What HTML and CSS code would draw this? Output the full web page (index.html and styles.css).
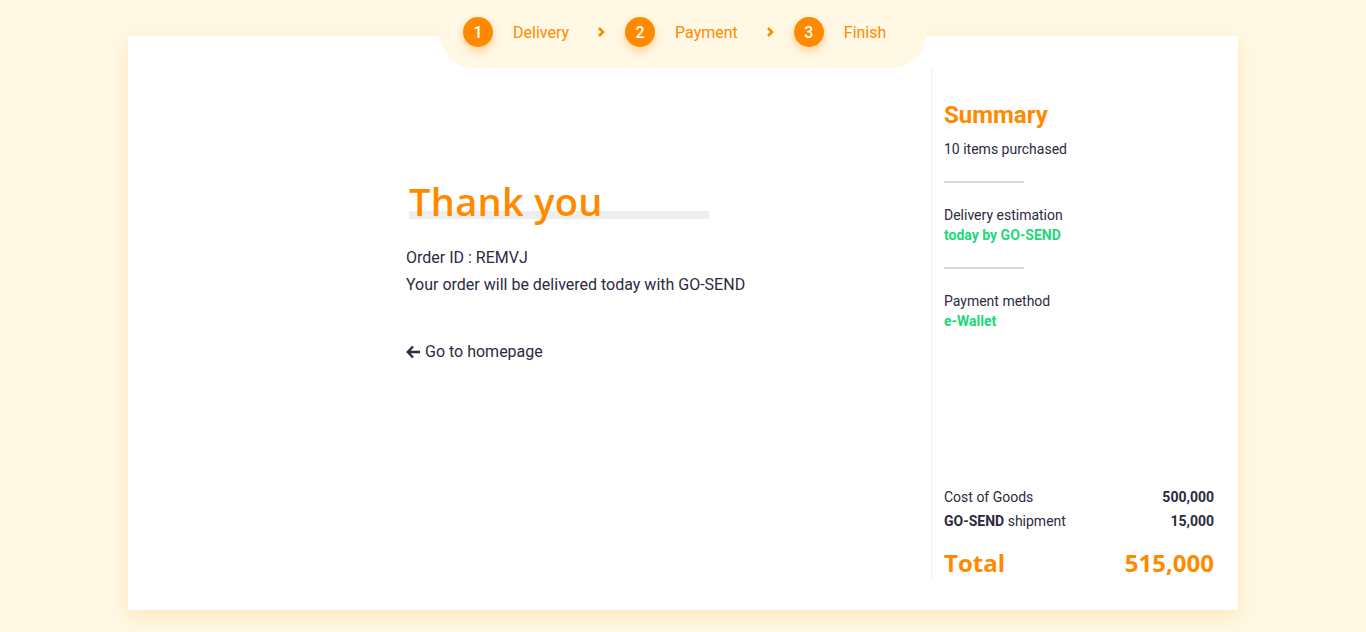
FILE: index.html
```html
<!DOCTYPE html>
<html lang="en">
<head>
<meta charset="utf-8">
<title>Finish</title>
<link rel="stylesheet" href="styles.css">
</head>
<body>
<div class="page">
  <nav class="steps">
    <div class="step"><span class="num">1</span><span class="label">Delivery</span></div>
    <svg class="chev" width="8" height="12" viewBox="0 0 8 12"><path d="M2 2 L6 6 L2 10" fill="none" stroke="#FF8A00" stroke-width="2.6" stroke-linecap="butt"/></svg>
    <div class="step"><span class="num">2</span><span class="label">Payment</span></div>
    <svg class="chev" width="8" height="12" viewBox="0 0 8 12"><path d="M2 2 L6 6 L2 10" fill="none" stroke="#FF8A00" stroke-width="2.6" stroke-linecap="butt"/></svg>
    <div class="step"><span class="num">3</span><span class="label">Finish</span></div>
  </nav>
  <main class="card">
    <section class="main">
      <h1 class="title">Thank you</h1>
      <p class="line">Order ID : REMVJ</p>
      <p class="line">Your order will be delivered today with GO-SEND</p>
      <a class="back" href="#">
        <svg width="15" height="14" viewBox="0 0 15 14"><path d="M7 1.5 L1.8 7 L7 12.5 M2 7 H14" fill="none" stroke="#2D2A40" stroke-width="2.4"/></svg>
        Go to homepage
      </a>
    </section>
    <aside class="summary">
      <div class="top">
        <h2 class="sum-title">Summary</h2>
        <p class="txt first">10 items purchased</p>
        <hr class="div">
        <p class="txt">Delivery estimation</p>
        <p class="txt green">today by GO-SEND</p>
        <hr class="div">
        <p class="txt">Payment method</p>
        <p class="txt green">e-Wallet</p>
      </div>
      <div class="bottom">
        <div class="row"><span>Cost of Goods</span><b>500,000</b></div>
        <div class="row"><span><b>GO-SEND</b> shipment</span><b>15,000</b></div>
        <div class="total"><span>Total</span><span>515,000</span></div>
      </div>
    </aside>
  </main>
</div>
</body>
</html>
```

FILE: styles.css
```css
* { box-sizing: border-box; }
html, body { margin: 0; padding: 0; }
body {
  background: #FFF8E5;
  font-family: Roboto, "Liberation Sans", sans-serif;
  color: #2D2A40;
  height: 632px;
  overflow: hidden;
}
.page {
  position: relative;
  padding-top: 36px;
}
.steps {
  position: absolute;
  top: 0;
  left: 50%;
  transform: translateX(-50%);
  width: 486px;
  height: 68px;
  background: #FFF8E5;
  border-radius: 0 0 34px 34px;
  display: flex;
  align-items: center;
  padding: 0 0 4px 23px;
  z-index: 2;
}
.step { display: flex; align-items: center; }
.num {
  width: 30px;
  height: 30px;
  border-radius: 50%;
  background: #FF8A00;
  color: #fff;
  font-weight: 500;
  font-size: 16px;
  display: flex;
  align-items: center;
  justify-content: center;
  box-shadow: 0 4px 8px rgba(255, 138, 0, 0.35);
}
.label {
  margin-left: 20px;
  color: #FF8A00;
  font-size: 16px;
  font-weight: 400;
}
.chev { margin: 0 20px 0 28px; }
.card {
  width: 1110px;
  height: 574px;
  margin: 0 auto;
  background: #fff;
  display: flex;
  padding: 32px 24px 32px 0;
  box-shadow: 0 6px 18px rgba(255, 200, 110, 0.35);
}
.main {
  flex: 1;
  padding-left: 278px;
  padding-top: 110px;
}
.title {
  position: relative;
  z-index: 0;
  display: inline-block;
  margin: 0 0 20px 3px;
  font-family: "Open Sans", sans-serif;
  font-weight: 600;
  font-size: 38px;
  line-height: 46px;
  color: #FF8A00;
  letter-spacing: 0.3px;
}
.title::before {
  content: "";
  position: absolute;
  left: 0;
  width: 300px;
  bottom: 5px;
  height: 8px;
  background: #EEEEEE;
  z-index: -1;
}
.line {
  margin: 0;
  font-size: 16px;
  line-height: 27px;
}
.back {
  display: inline-flex;
  align-items: center;
  gap: 4px;
  margin-top: 40px;
  font-size: 16px;
  line-height: 27px;
  color: #2D2A40;
  text-decoration: none;
}
.summary {
  width: 307px;
  border-left: 1px solid #FFEBD9;
  padding-left: 12px;
  display: flex;
  flex-direction: column;
  justify-content: space-between;
  padding-top: 32px;
  margin-right: -24px;
  padding-right: 24px;
}
.sum-title {
  margin: 0;
  font-family: Roboto, sans-serif;
  font-weight: 700;
  font-size: 24px;
  line-height: 30px;
  color: #FF8A00;
}
.txt {
  margin: 0;
  font-size: 14px;
  line-height: 20px;
}
.txt.first { margin-top: 9px; }
.green { color: #1BD97B; font-weight: 700; }
.div {
  width: 80px;
  height: 2px;
  border: 0;
  background: #D8D8D8;
  margin: 22px 0;
}
.row {
  display: flex;
  justify-content: space-between;
  font-size: 14px;
  line-height: 24px;
}
.row b { font-weight: 700; }
.total {
  display: flex;
  justify-content: space-between;
  margin-top: 15px;
  font-family: "Open Sans", sans-serif;
  font-weight: 700;
  font-size: 24px;
  line-height: 30px;
  color: #FF8A00;
}
```
